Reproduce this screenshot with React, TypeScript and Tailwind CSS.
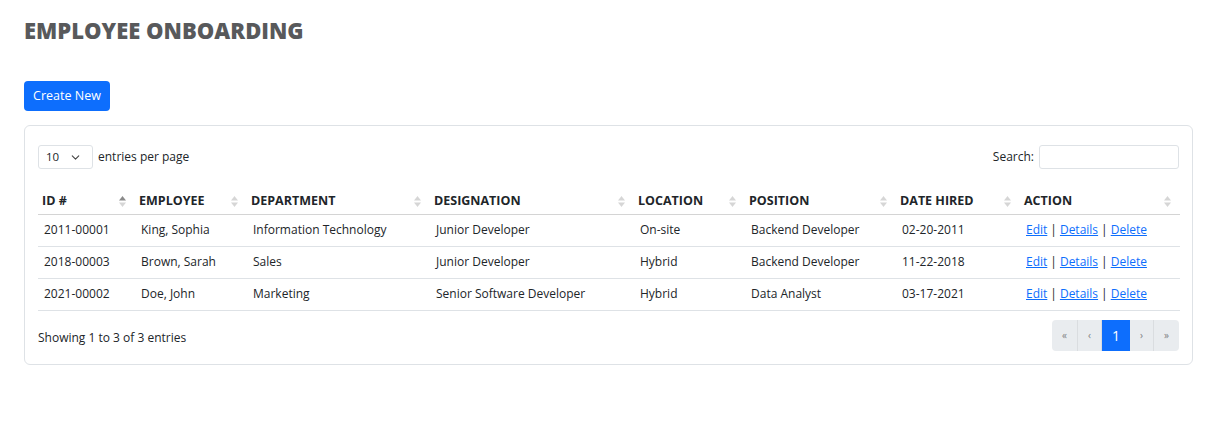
import { ChevronDown } from 'lucide-react';

const rows = [
  {
    id: '2011-00001',
    name: 'King, Sophia',
    dept: 'Information Technology',
    desig: 'Junior Developer',
    loc: 'On-site',
    pos: 'Backend Developer',
    hired: '02-20-2011',
  },
  {
    id: '2018-00003',
    name: 'Brown, Sarah',
    dept: 'Sales',
    desig: 'Junior Developer',
    loc: 'Hybrid',
    pos: 'Backend Developer',
    hired: '11-22-2018',
  },
  {
    id: '2021-00002',
    name: 'Doe, John',
    dept: 'Marketing',
    desig: 'Senior Software Developer',
    loc: 'Hybrid',
    pos: 'Data Analyst',
    hired: '03-17-2021',
  },
];

const columns = [
  { label: 'ID #', width: 97, active: true },
  { label: 'EMPLOYEE', width: 112 },
  { label: 'DEPARTMENT', width: 183 },
  { label: 'DESIGNATION', width: 204 },
  { label: 'LOCATION', width: 111 },
  { label: 'POSITION', width: 151 },
  { label: 'DATE HIRED', width: 124 },
  { label: 'ACTION', width: 160 },
];

function SortIcon({ active }: { active?: boolean }) {
  return (
    <svg width="7" height="11" viewBox="0 0 7 11" className="shrink-0">
      <path d="M3.5 0 L7 4.5 L0 4.5 Z" fill={active ? '#8a8a8a' : '#d6d6d6'} />
      <path d="M0 6.5 L7 6.5 L3.5 11 Z" fill="#d6d6d6" />
    </svg>
  );
}

function ActionLinks() {
  return (
    <span className="text-[#212529]">
      <a className="text-[#0d6efd] underline">Edit</a>
      <span className="mx-[3px]">|</span>
      <a className="text-[#0d6efd] underline">Details</a>
      <span className="mx-[3px]">|</span>
      <a className="text-[#0d6efd] underline">Delete</a>
    </span>
  );
}

export default function App() {
  return (
    <div className="min-h-[422px] bg-white pl-6 pr-[33px] pt-[15px] text-[12px] text-[#212529] font-['Open_Sans',sans-serif]">
      <h1 className="text-[22px] leading-[30px] font-extrabold text-[#58595b]">
        EMPLOYEE ONBOARDING
      </h1>

      <button className="mt-[36px] h-[30px] w-[86px] rounded-[4px] bg-[#0d6efd] text-[12.5px] text-white">
        Create New
      </button>

      <div className="mt-[14px] rounded-[6px] border border-[#dee2e6] px-[13px] pt-[19px] pb-[13px]">
        <div className="flex items-center justify-between">
          <div className="flex items-center">
            <div className="flex h-[24px] w-[55px] items-center justify-between rounded-[3px] border border-[#dee2e6] pl-[7px] pr-[10px] text-[11.5px]">
              <span>10</span>
              <ChevronDown size={13} strokeWidth={2} className="text-[#444]" />
            </div>
            <span className="ml-[5px]">entries per page</span>
          </div>
          <div className="flex items-center">
            <span className="mr-[5px]">Search:</span>
            <div className="h-[24px] w-[140px] rounded-[3px] border border-[#dee2e6]" />
          </div>
        </div>

        <table className="mt-[19px] w-full table-fixed border-collapse">
          <colgroup>
            {columns.map((c) => (
              <col key={c.label} style={{ width: c.width }} />
            ))}
          </colgroup>
          <thead>
            <tr className="border-b border-[#d4d4d4]">
              {columns.map((c) => (
                <th key={c.label} className="h-[26px] p-0 pl-[4px] pr-[9px] pt-[1px] text-left text-[12.5px] font-bold">
                  <div className="flex items-center justify-between">
                    <span>{c.label}</span>
                    <SortIcon active={c.active} />
                  </div>
                </th>
              ))}
            </tr>
          </thead>
          <tbody>
            {rows.map((r) => (
              <tr key={r.id} className="border-b border-[#dee2e6]">
                <td className="h-[32px] p-0 pl-[6px]">{r.id}</td>
                <td className="p-0 pl-[6px]">{r.name}</td>
                <td className="p-0 pl-[6px]">{r.dept}</td>
                <td className="p-0 pl-[6px]">{r.desig}</td>
                <td className="p-0 pl-[6px]">{r.loc}</td>
                <td className="p-0 pl-[6px]">{r.pos}</td>
                <td className="p-0 pl-[6px]">{r.hired}</td>
                <td className="p-0 pl-[6px]">
                  <ActionLinks />
                </td>
              </tr>
            ))}
          </tbody>
        </table>

        <div className="mt-[9px] flex items-center justify-between">
          <span className="pt-[5px]">Showing 1 to 3 of 3 entries</span>
          <div className="flex h-[31px] overflow-hidden rounded-[4px] bg-[#e9ecef] text-[10px] text-[#7d7f82]">
            <span className="flex w-[26px] items-center justify-center border-r border-[#dadde0]">«</span>
            <span className="flex w-[24px] items-center justify-center border-r border-[#dadde0]">‹</span>
            <span className="flex w-[28px] items-center justify-center bg-[#0d6efd] text-[14px] text-white">1</span>
            <span className="flex w-[24px] items-center justify-center border-r border-[#dadde0]">›</span>
            <span className="flex w-[25px] items-center justify-center">»</span>
          </div>
        </div>
      </div>
    </div>
  );
}
